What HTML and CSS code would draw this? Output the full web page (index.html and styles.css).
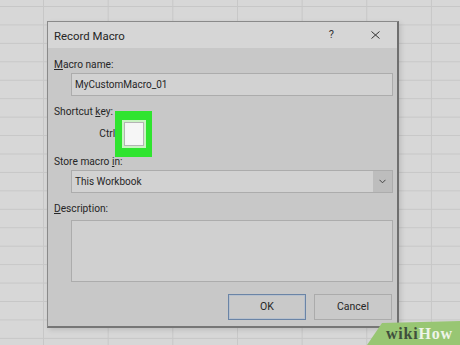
FILE: index.html
```html
<!DOCTYPE html>
<html>
<head>
<meta charset="utf-8">
<link rel="stylesheet" href="styles.css">
</head>
<body>
<div class="dialog">
  <div class="titlebar">
    <span class="title">Record Macro</span>
    <span class="help">?</span>
    <svg class="close" width="9" height="8" viewBox="0 0 9 8"><path d="M0.5 0.5 L8.5 7.5 M8.5 0.5 L0.5 7.5" stroke="#333" stroke-width="1" fill="none"/></svg>
  </div>
  <div class="body">
    <div class="label l1"><u>M</u>acro name:</div>
    <div class="field">MyCustomMacro_01</div>
    <div class="label l2">Shortcut <u>k</u>ey:</div>
    <div class="keyrow">
      <span class="ctrl">Ctrl+</span>
      <span class="hl"><span class="keybox"></span></span>
    </div>
    <div class="label l3">Store macro <u>i</u>n:</div>
    <div class="field select">
      <span class="seltext">This Workbook</span>
      <span class="arrow"><svg width="7" height="5" viewBox="0 0 7 5"><path d="M0.5 0.8 L3.5 3.8 L6.5 0.8" stroke="#444" stroke-width="1" fill="none"/></svg></span>
    </div>
    <div class="label l4"><u>D</u>escription:</div>
    <div class="textarea"></div>
    <div class="buttons">
      <div class="btn ok">OK</div>
      <div class="btn cancel">Cancel</div>
    </div>
  </div>
</div>
<div class="wikihow"><span class="wiki">wiki</span><span class="how">How</span></div>
</body>
</html>
```

FILE: styles.css
```css
html, body {
  margin: 0;
  padding: 0;
}
body {
  width: 460px;
  height: 345px;
  overflow: hidden;
  position: relative;
  background-color: #d7d7d7;
  background-image:
    linear-gradient(to right, #c7c7c7 1px, transparent 1px),
    linear-gradient(to bottom, #c7c7c7 1px, transparent 1px);
  background-size: 64.67px 18.45px;
  background-position: 43px 6px;
  font-family: Roboto, "Liberation Sans", sans-serif;
  color: #262626;
}
.dialog {
  position: absolute;
  left: 47px;
  top: 21px;
  width: 352px;
  height: 307px;
  box-sizing: border-box;
  border: 1px solid #8a8a8a;
  border-right: 2px solid #6f6f6f;
  border-bottom: 2px solid #767676;
  background: #c8c8c8;
  box-shadow: 2px 2px 5px rgba(0,0,0,0.12);
  z-index: 1;
}
.titlebar {
  height: 26px;
  background: #d6d6d6;
  display: flex;
  align-items: center;
  padding: 0 17px 0 6px;
}
.title {
  flex: 1;
  font-size: 11.4px;
  line-height: 26px;
  padding-top: 1px;
}
.help {
  font-size: 11px;
  line-height: 12px;
  color: #333;
}
.close {
  display: block;
  margin-left: 37px;
}
.body {
  padding: 0 4px 0 6px;
  display: flex;
  flex-direction: column;
}
.label {
  font-size: 10.2px;
  line-height: 14px;
}
.label u {
  text-decoration-thickness: 1px;
  text-underline-offset: 1px;
}
.l1 { margin-top: 10px; }
.l2 { margin-top: 9px; }
.l3 { margin-top: 9px; }
.l4 { margin-top: 9px; }
.field {
  margin: 1px 0 0 17px;
  height: 23px;
  box-sizing: border-box;
  border: 1px solid #acacac;
  background: #d2d2d2;
  font-size: 10px;
  line-height: 21px;
  padding-left: 3px;
}
.select {
  display: flex;
  padding-right: 0;
}
.seltext {
  flex: 1;
}
.arrow {
  width: 19px;
  background: #bdbdbd;
  display: flex;
  align-items: center;
  justify-content: center;
}
.arrow svg {
  display: block;
}
.keyrow {
  margin-top: 3px;
  display: flex;
  align-items: center;
  height: 24px;
}
.ctrl {
  width: 67px;
  text-align: right;
  font-size: 10.2px;
  line-height: 14px;
  margin-right: 3px;
  white-space: nowrap;
}
.hl {
  display: block;
  background: #2fe42f;
  padding: 11px 8px 11px 9px;
  margin: -11px -8px -11px -9px;
}
.keybox {
  display: block;
  width: 20px;
  height: 24px;
  box-sizing: border-box;
  border: 1px solid #b4b4b4;
  background: #f6f6f6;
  box-shadow: 0 0 0 2px #c9f3c2;
}
.textarea {
  margin: 4px 0 0 17px;
  height: 62px;
  box-sizing: border-box;
  border: 1px solid #acacac;
  background: #d0d0d0;
}
.buttons {
  margin-top: 12px;
  display: flex;
  justify-content: flex-end;
  gap: 8px;
  padding-right: 1px;
}
.btn {
  width: 78px;
  height: 26px;
  box-sizing: border-box;
  font-size: 10.5px;
  line-height: 24px;
  text-align: center;
  background: #c9c9c9;
  border: 1px solid #ababab;
}
.ok {
  border: 1px solid #6a84a6;
  box-shadow: inset 0 0 0 1px #b7c0cc;
}
.wikihow {
  position: absolute;
  right: 0;
  bottom: 0;
  width: 93px;
  height: 24px;
  box-sizing: border-box;
  background: #98c673;
  clip-path: polygon(0 100%, 15px 2px, 100% 0, 100% 100%);
  padding-left: 19px;
  font-family: "Liberation Serif", "DejaVu Serif", serif;
  font-weight: bold;
  font-size: 16px;
  letter-spacing: 0.8px;
  line-height: 26px;
  z-index: 2;
}
.wiki { color: #3f4f3c; }
.how { color: #eef4e8; }
```
